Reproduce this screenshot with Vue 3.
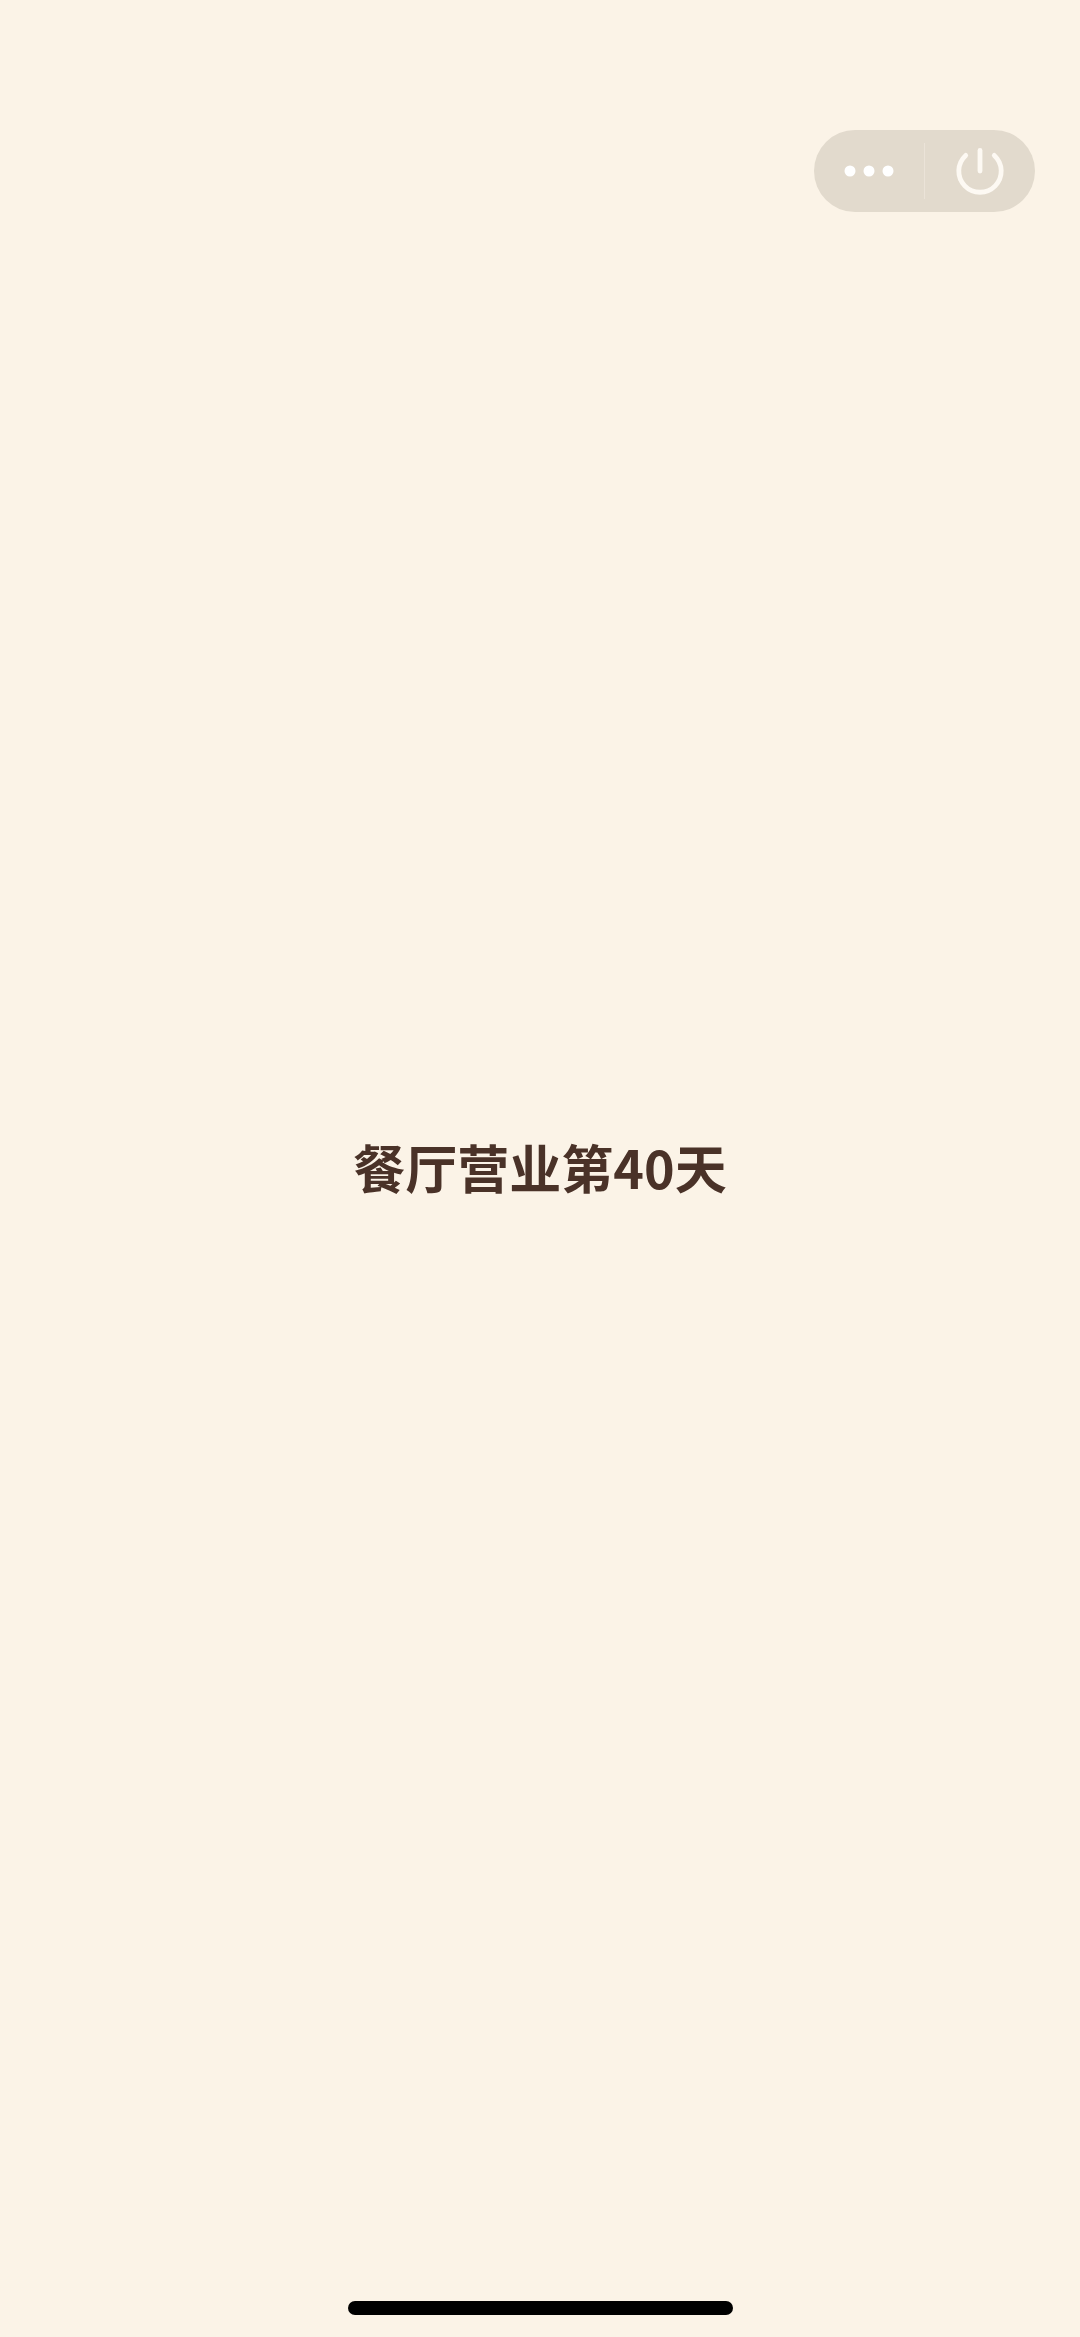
<script setup>
const title = '餐厅营业第40天'
</script>

<template>
  <div class="page">
    <main class="center">
      <h1 class="title">{{ title }}</h1>
    </main>

    <div class="capsule">
      <button class="cap-btn more" aria-label="更多">
        <svg width="50" height="12" viewBox="0 0 50 12">
          <circle cx="6" cy="6" r="5.5" />
          <circle cx="25" cy="6" r="5.5" />
          <circle cx="44" cy="6" r="5.5" />
        </svg>
      </button>
      <span class="divider"></span>
      <button class="cap-btn power" aria-label="关闭">
        <svg width="50" height="50" viewBox="0 0 50 50" fill="none">
          <path d="M10.7 9.4 A 21.2 21.2 0 1 0 39.3 9.4" />
          <path d="M25 4.5 V 25" />
        </svg>
      </button>
    </div>

    <div class="home-bar"></div>
  </div>
</template>

<style>
html, body { margin: 0; background: #fbf3e7; }
</style>

<style scoped>
.page {
  position: relative;
  width: 1080px;
  height: 2337px;
  overflow: hidden;
  background: #fbf3e7;
  display: flex;
  flex-direction: column;
}
.center {
  flex: 1;
  display: flex;
  align-items: center;
  justify-content: center;
  padding-bottom: 3px;
}
.title {
  margin: 0;
  font-family: "Noto Sans CJK SC", "Noto Sans", sans-serif;
  font-size: 52px;
  line-height: 72px;
  font-weight: 700;
  color: #4a3228;
}
.capsule {
  position: absolute;
  top: 130px;
  left: 814px;
  width: 221px;
  height: 82px;
  border-radius: 41px;
  background: #e2dacd;
  display: flex;
  align-items: center;
}
.cap-btn {
  flex: 1;
  height: 100%;
  padding: 0;
  border: 0;
  background: none;
  display: flex;
  align-items: center;
  justify-content: center;
}
.more svg circle { fill: #fff; }
.power svg path {
  stroke: #fdf9f3;
  stroke-width: 4.8;
  stroke-linecap: round;
}
.divider {
  width: 1px;
  height: 56px;
  background: #ebe3d8;
}
.home-bar {
  position: absolute;
  left: 348px;
  top: 2301px;
  width: 385px;
  height: 14px;
  border-radius: 7px;
  background: #000;
}
</style>
